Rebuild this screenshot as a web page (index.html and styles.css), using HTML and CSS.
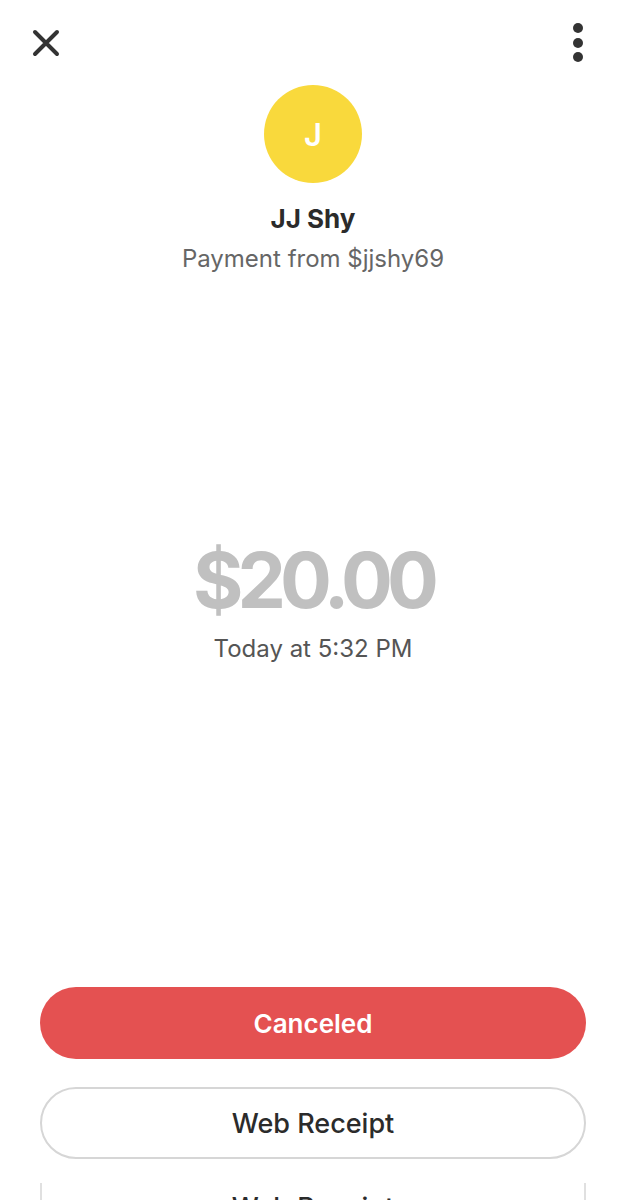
FILE: index.html
```html
<!doctype html>
<html lang="en">
<head>
	<meta charset="utf-8">
	<title>Payment</title>
	<link rel="stylesheet" href="styles.css">
</head>

<body>
	<div id='page'>
		<div class='top-bar'>
			<svg class='icon-close' width="28" height="28" viewBox="0 0 28 28">
				<path d="M3 3 L25 25 M25 3 L3 25" stroke="#333" stroke-width="4" stroke-linecap="round" fill="none"/>
			</svg>
			<svg class='icon-more' width="12" height="40" viewBox="0 0 12 40">
				<circle cx="6" cy="5" r="5" fill="#333"/>
				<circle cx="6" cy="20" r="5" fill="#333"/>
				<circle cx="6" cy="34" r="5" fill="#333"/>
			</svg>
		</div>

		<div class='profile'>
			<div class='avatar'>J</div>
			<div class='name'>JJ Shy</div>
			<div class='sub'>Payment from $jjshy69</div>
		</div>

		<div class='amount-box'>
			<div class='amount'>$20.00</div>
			<div class='when'>Today at 5:32 PM</div>
		</div>

		<div class='actions'>
			<div class='btn btn-red'>Canceled</div>
			<div class='btn btn-line'>Web Receipt</div>
			<div class='btn btn-cut'>Web Receipt</div>
		</div>
	</div>
</body>
</html>
```

FILE: styles.css
```css
*{ margin: 0px; padding: 0px; box-sizing: border-box; }
body{
	background-color: white; overflow: hidden;
	font-family: Inter, "Noto Sans", sans-serif; }
#page{
	width: 626px; height: 1200px; overflow: hidden; }

.top-bar{
	display: flex; justify-content: space-between; align-items: flex-start;
	height: 85px; padding: 23px 42px 0 32px; }
.icon-close{ margin-top: 6px; }

.profile{
	display: flex; flex-direction: column; align-items: center; }
.avatar{
	width: 98px; height: 98px; border-radius: 50%;
	background-color: #f9d93c; color: white;
	display: flex; align-items: center; justify-content: center;
	font-size: 31px; font-weight: 600; }
.name{
	margin-top: 21px; font-size: 26px; line-height: 30px;
	font-weight: 700; color: #2b2b2b; }
.sub{
	margin-top: 10px; font-size: 24px; line-height: 30px;
	color: #666; }

.amount-box{
	display: flex; flex-direction: column; align-items: center;
	margin-top: 261px; }
.amount{
	font-size: 77px; line-height: 90px; font-weight: 700;
	color: #c0c0c0; letter-spacing: -6px; }
.when{
	margin-top: 9px; font-size: 24px; line-height: 30px; color: #555; }

.actions{
	display: flex; flex-direction: column; gap: 28px;
	margin-top: 323px; padding: 0 40px; }
.btn{
	height: 72px; border-radius: 36px;
	display: flex; align-items: center; justify-content: center;
	font-size: 26px; font-weight: 600; }
.btn-red{
	background-color: #e45151; color: white; }
.btn-line{
	border: 2px solid #d6d6d6; color: #2b2b2b;
	font-size: 27px; font-weight: 500; }
.btn-cut{
	border-left: 2px solid #e0e0e0; border-right: 2px solid #e0e0e0;
	border-radius: 0; margin-top: -4px; align-items: flex-start;
	padding-top: 8px; color: #2b2b2b; font-size: 27px; font-weight: 500; }
```
